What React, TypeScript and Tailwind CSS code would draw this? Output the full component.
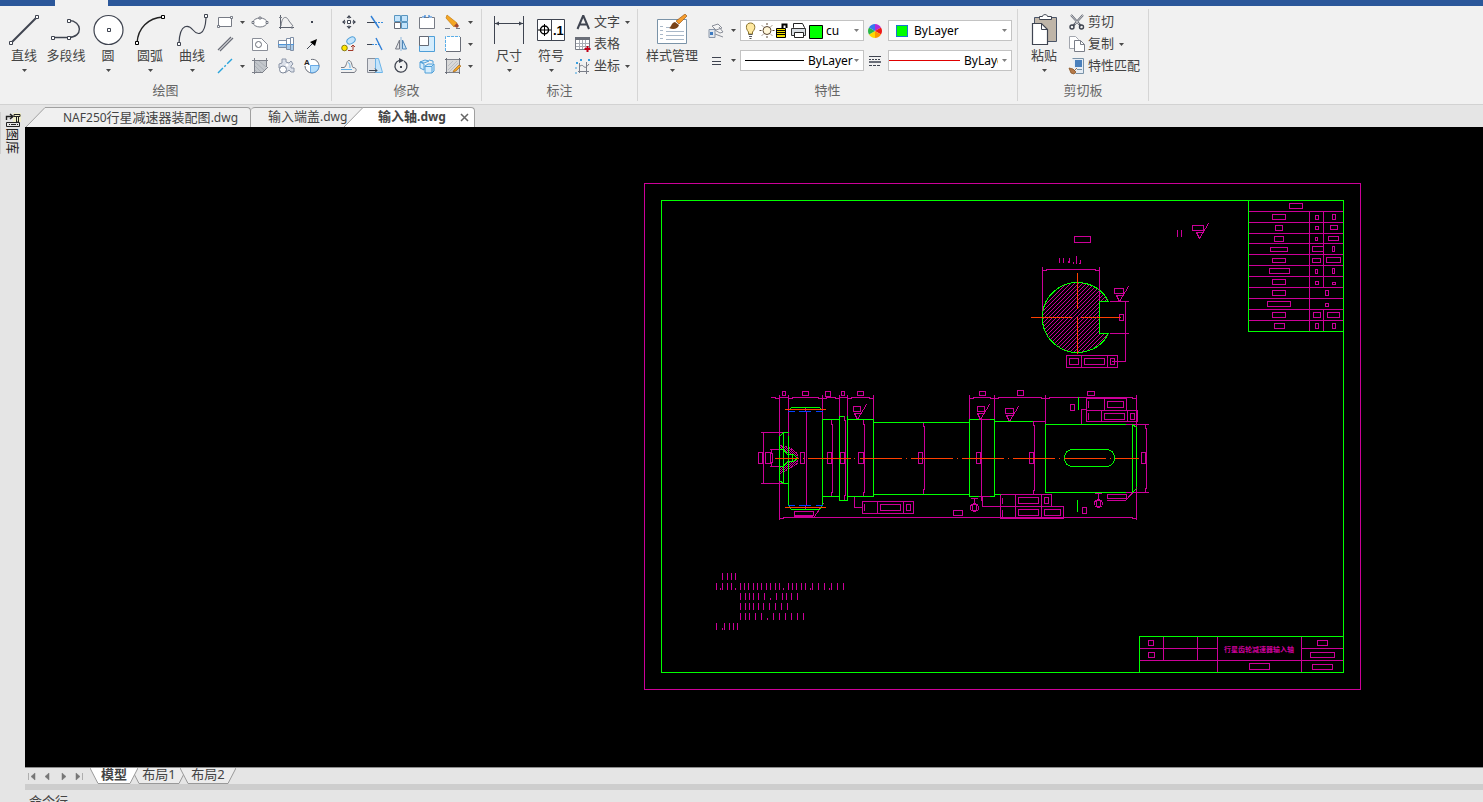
import React, { useState } from 'react';

const INK = '#3f4450';
const BLUE = '#3b8ede';
const PALE = '#c4e4fb';

function Caret({ className = '' }: { className?: string }) {
  return (
    <svg viewBox="0 0 5 3" className={`w-[5px] h-[3px] shrink-0 ${className}`} fill="#4a4a4a" aria-hidden="true">
      <path d="M0 0h5L2.5 3z" />
    </svg>
  );
}

function Icon({ children }: { children: React.ReactNode }) {
  return (
    <svg viewBox="0 0 18 18" className="w-[18px] h-[18px] shrink-0" fill="none" stroke={INK} aria-hidden="true">
      {children}
    </svg>
  );
}

function BigIcon({ children }: { children: React.ReactNode }) {
  return (
    <svg viewBox="0 0 32 32" className="w-8 h-8 shrink-0" fill="none" stroke={INK} aria-hidden="true">
      {children}
    </svg>
  );
}

const bigIcons: Record<string, React.ReactNode> = {
  line: (
    <>
      <path d="M3 29L29 3" strokeWidth="2" />
      <path d="M1.500 27.500h3v3h-3zM27.500 1.500h3v3h-3z" fill="#fff" />
    </>
  ),
  pline: (
    <>
      <path d="M3 23.500h15c16 0 14-17 1-17" strokeWidth="1.400" />
      <path d="M1.500 22.500h3v3h-3zM17.500 22.500h3v3h-3zM17.500 5.500h3v3h-3z" fill="#fff" />
    </>
  ),
  circle: (
    <>
      <circle cx="16.500" cy="16" r="14.500" fill="#fff" strokeWidth="1.200" />
      <path d="M15.500 14.500h3v3h-3z" />
    </>
  ),
  arc: (
    <>
      <path d="M3 29C4 14 14 4 29 3" stroke="#222" strokeWidth="1.400" />
      <path d="M1.500 27.500h3v3h-3zM27.500 1.500h3v3h-3z" fill="#fff" stroke="#000" />
    </>
  ),
  curve: (
    <>
      <path d="M3 29C4 8 13 11 17 16s12 7 13-12" strokeWidth="1.200" />
      <path d="M1.500 28.500h3v3h-3zM28.500.500h3v3h-3z" fill="#fff" />
    </>
  ),
  dim: (
    <>
      <path d="M1.500 2v28M30.500 2v28" />
      <path d="M2 9.500h28" />
      <path d="M2 9.500l4-2v4zM30 9.500l-4-2v4z" fill={INK} stroke="none" />
    </>
  ),
  symbol: (
    <>
      <path d="M2.500 5.500h27v21h-27zM16.500 5.500v21" fill="#fff" />
      <circle cx="9.500" cy="16" r="4" stroke="#000" strokeWidth="1.500" />
      <path d="M3 16h13M9.500 10v12" stroke="#000" />
      <text x="18" y="21" fontSize="13" fontWeight="700" fill="#000" stroke="none" fontFamily="Liberation Sans, sans-serif">.1</text>
    </>
  ),
  style: (
    <>
      <path d="M1.500 5.500h29v24h-29z" fill="#fff" stroke="#7a93a8" />
      <path d="M4 12.500h3M4 16.500h3M4 20.500h3M4 24.500h3M10 13.500h7M10 17.500h18M10 21.500h18M10 25.500h18" stroke="#a9b8c8" />
      <path d="M29 0l2 2-8 8-3-3z" fill="#f59c2c" stroke="#8a4a12" strokeWidth=".600" />
      <path d="M13 14c2 0 2-5 6-6l4 3c-1 4-6 5-10 3z" fill="#7a4318" stroke="none" />
    </>
  ),
  paste: (
    <>
      <path d="M6.500 3.500h22v24h-22z" fill="#bfb5a8" stroke="#4a5568" />
      <path d="M11.500 4.500v-2h3c0-2.500 5-2.500 5 0h4v3h-12z" fill="#fff" />
      <path d="M4.500 9.500h9l6 6v15h-15z" fill="#fff" strokeWidth="1.200" />
      <path d="M13.500 9.500v6h6" />
    </>
  ),
};

const icons: Record<string, React.ReactNode> = {
  rect: (
    <>
      <path d="M2.500 4.500h13v9h-13z" fill="#fff" stroke="#777b85" />
      <path d="M1.500 12.500h2v2h-2zM14.500 3.500h2v2h-2z" fill="#fff" stroke="#5c616d" strokeWidth=".800" />
    </>
  ),
  mline: <path d="M2 15L15 2M4 16L17 3" stroke="#6a6e78" strokeWidth="1.300" />,
  xline: <path d="M2 16L16 2" stroke="#28a4dc" strokeWidth="1.400" strokeDasharray="7 2 2 2" />,
  ellipse: (
    <>
      <ellipse cx="9" cy="9.500" rx="7" ry="4.500" fill="#fff" stroke="#777b85" />
      <path d="M1 8.500h2v2H1zM15 8.500h2v2h-2zM8 4h2v2H8z" fill="#fff" stroke="#5c616d" strokeWidth=".800" />
    </>
  ),
  region: (
    <>
      <path d="M1.500 3.500h9l6 6v6h-15z" fill="#fff" stroke="#8a8e98" />
      <circle cx="7.500" cy="9.500" r="3" stroke="#6a6e78" />
    </>
  ),
  hatch: (
    <>
      <path d="M3.500 3.500h12v8l-4 4h-8z" fill="#c3c7cc" stroke="none" />
      <path d="M4 5l10 9M4 9l6 6M8 4l7 6M4 13l2 2" stroke="#a4a9b0" strokeWidth=".800" />
      <path d="M3.500 1v16M1 3.500h16M15.500 1v9M1 15.500h10M17 10l-6 6" stroke="#7d818a" />
    </>
  ),
  chart: (
    <>
      <path d="M3.500 2v14M2 14.500h15" stroke="#5c616d" />
      <path d="M4 13C5 2 10 3 12 8l4 5M2 4.500h3M15 13v3" stroke="#7d818a" />
    </>
  ),
  flange: (
    <>
      <path d="M1.500 5.500h8v-2h4v-1h3v13h-3v-1h-4v-2h-8z" fill="#fff" stroke="#7f8fa6" />
      <path d="M2 10h14v5h-2l-1-1h-3l-1-2H2z" fill="#a8cbea" stroke="none" />
      <path d="M1 9.500h16" stroke="#4d94d8" />
      <path d="M9.500 4v10M13.500 3v12" stroke="#7f8fa6" />
    </>
  ),
  gear: (
    <>
      <path d="M5 2h4v3l3 1 2-2 2 3-2 2 0 2h3v4h-3l-2-2-4 3-2-4-4-1V7l3-1z" fill="#dce1ea" stroke="#8c96a8" />
      <circle cx="6" cy="12.500" r="3.500" fill="#fff" stroke="#7d8799" />
      <circle cx="10" cy="8" r="1.500" fill="#fff" stroke="none" />
    </>
  ),
  point: <path d="M8 8h2v2H8z" fill={INK} stroke="none" />,
  leader: (
    <>
      <path d="M4 14l6-6" />
      <path d="M14 4l-2 7-5-4z" fill="#000" stroke="none" />
    </>
  ),
  viewA: (
    <>
      <path d="M8 2.500c5-1 8 3 8 6.500a7 7 0 0 1-14 0" fill="#fff" stroke="#6a6e78" />
      <path d="M7.500 8.500H16c0 5-4 8-8.500 7z" fill="#b5defb" stroke="#3b8ede" strokeWidth=".700" />
      <text x="1" y="8" fontSize="8" fontWeight="700" fill="#222" stroke="none" fontFamily="Liberation Sans, sans-serif">A</text>
    </>
  ),
  move: (
    <>
      <path d="M7.500 7.500h3v3h-3z" fill="#fff" />
      <path d="M9 2l2.500 3h-5zM9 16l2.500-3h-5zM2 9l3-2.500v5zM16 9l-3-2.500v5z" fill={INK} stroke="none" />
      <path d="M9 4v2M9 12v2M4 9h2M12 9h2" stroke="#8a8e98" />
    </>
  ),
  trim: (
    <>
      <path d="M1 9.500h8" stroke={INK} />
      <path d="M9 9.500h8" stroke={BLUE} strokeDasharray="2 1" />
      <path d="M5 3l8 12" stroke="#2f7fd6" strokeWidth="1.400" />
    </>
  ),
  array: (
    <>
      <path d="M2.500 2.500h6v6h-6zM9.500 2.500h6v6h-6zM9.500 9.500h6v6h-6z" fill={PALE} stroke="#5a96c0" />
      <path d="M2.500 9.500h6v6h-6z" fill="#fff" stroke="#666b76" />
    </>
  ),
  breakIt: (
    <>
      <path d="M4 4.500H1.500v11h15v-11H14M6 4.500h5" fill="#fff" stroke="#777b85" />
      <path d="M4 4h3V2M14 4h-3V2" stroke="#2f7fd6" strokeWidth="1.200" />
    </>
  ),
  erase: (
    <>
      <path d="M3 2l10 8-3 4-8-9z" fill="#f5a623" stroke="#c67c0e" strokeWidth=".700" />
      <path d="M10 13l3-3 2 3-2 2z" fill="#a24b32" stroke="none" />
      <path d="M1 15.500h5M12 15.500h4" stroke="#777b85" />
    </>
  ),
  copy: (
    <>
      <ellipse cx="11" cy="5.500" rx="4.500" ry="3" transform="rotate(-30 11 5.500)" fill={PALE} stroke="#4f9fd8" />
      <circle cx="4.500" cy="13" r="2.800" fill="#ffe600" stroke="#6b6200" strokeWidth=".800" />
      <path d="M8 15.500h5V10l-2 2m2-2l2 2" stroke="#a33a2a" />
    </>
  ),
  extend: (
    <>
      <path d="M1 9.500h5" />
      <path d="M6 9.500h7" stroke={BLUE} strokeDasharray="2 1" />
      <path d="M10 3l6 12" stroke="#2f7fd6" strokeWidth="1.400" />
    </>
  ),
  mirror: (
    <>
      <path d="M7.500 5v9h-4z" fill="#e2e4e8" stroke="#777b85" />
      <path d="M10.500 5v9h4z" fill={PALE} stroke="#4f86b8" />
      <path d="M9 2v14" stroke="#8bb6dc" />
    </>
  ),
  scale: (
    <>
      <path d="M1.500 1.500h15v15h-15z" fill="#d5edfd" stroke="#4f9fd8" />
      <path d="M1.500 1.500h9v9h-9z" fill="#fff" stroke="#666b76" />
    </>
  ),
  stretch: (
    <>
      <path d="M2 2h14v14H2z" fill="#fff" stroke="none" />
      <path d="M16.500 2v14.500H2" stroke="#6a6e78" />
      <path d="M1.500 16V1.500H16" stroke="#5aaee8" strokeDasharray="3 1" />
    </>
  ),
  offset: (
    <>
      <path d="M1 15.500h13c3-1 3-5-1-5-1 0-1-7-4-7s-2 6-5 7H1" stroke="#777b85" />
      <path d="M1 12.500h11M8 6c2-1 2 4 2 5" stroke="#5aaee8" />
    </>
  ),
  chamfer: (
    <>
      <path d="M1.500 1.500h8v14h-8z" fill="#e2e4e8" stroke="#8a8e98" />
      <path d="M9.500 1.500h3l4 14h-7z" fill={PALE} stroke="#6db4e8" />
      <path d="M3 13.500h8l-2-2m2 2l-2 2" />
    </>
  ),
  rotate: (
    <>
      <path d="M7 3.500a6 6 0 1 0 5 .500" strokeWidth="1.300" />
      <path d="M7 1l5 2.500L7 6z" fill={INK} stroke="none" />
      <path d="M8 9h2v2H8z" fill={INK} stroke="none" />
    </>
  ),
  explode: (
    <>
      <path d="M2 5l5-2 4 1-5 2zM2 5v6l4 2V7zM7 9l3-2h6v7l-2 2H7z" fill="#d5edfd" stroke="#4f9fd8" />
      <path d="M7 9.500h7V16M14 9l2-2M11 3l4 1v2" stroke="#4f9fd8" />
    </>
  ),
  editHatch: (
    <>
      <path d="M2.500 2.500h13v13h-13z" fill="#d9d9d9" stroke="#7d818a" />
      <path d="M4 9l5-5M4 13l9-9M5 15l9-9" stroke="#b4b8be" strokeWidth=".800" />
      <path d="M1 2.500h2M2.500 1v2M15 2.500h2M15.500 1v2M1 15.500h2M2.500 15v2M15.500 15v2" stroke="#6a6e78" />
      <path d="M10 13l5-5 2 1-5 5-3 1z" fill="#f5a623" stroke="#9a5c10" strokeWidth=".600" />
    </>
  ),
  textA: <path d="M3.500 16L9 3h.500L15 16M5.500 11.500h7" strokeWidth="2" />,
  table: (
    <>
      <path d="M1.500 2.500h14v12h-14z" fill="#fff" stroke="#777b85" />
      <path d="M1 2h15v3H1z" fill="#6a6e78" stroke="none" />
      <path d="M2 8.500h13M2 11.500h13M5.500 5v9M8.500 5v9M11.500 5v9" stroke="#a8acb4" />
      <path d="M13.500 11v6M10.500 14h6" stroke="#c00018" strokeWidth="2" />
    </>
  ),
  coord: (
    <>
      <path d="M5.500 6v10M4 14.500h11M6 9c5-3 3 6 9-2M12.500 5v12" stroke="#7a7e88" />
      <path d="M2 5l2 2M4 5l-2 2M6 2l2 2M8 2L6 4M14 2l2 2M16 2l-2 2M1 11h2M1 16h2" stroke="#3aa0e0" />
    </>
  ),
  layers: (
    <>
      <path d="M5 4l6-2 4 4-6 2zM6 7l7 4 3-1-4-5" fill="#f5f5f5" stroke="#8a8e98" />
      <path d="M2 7.500h6v8H2z" fill="#dfe6ee" stroke="#8a96a8" />
      <path d="M3 10h3v3H3z" fill="#3c7ac0" stroke="none" />
      <path d="M8 12l8 3" stroke="#8a8e98" />
    </>
  ),
  weight: <path d="M5 5.500h9M5 9.500h9M5 12.500h9" />,
  ltype: (
    <>
      <path d="M3 4.500h12" />
      <path d="M3 7.500h12" strokeDasharray="2 1" />
      <path d="M3 10h12" strokeWidth="2" stroke="#6a6e78" />
      <path d="M3 13.500h12" strokeDasharray="3 1" />
    </>
  ),
  wheel: (
    <g stroke="none" transform="translate(9 9)">
      <path d="M0 0L0-7A7 7 0 0 1 6-3.500z" fill="#b22bd8" />
      <path d="M0 0L6-3.500A7 7 0 0 1 6 3.500z" fill="#f01818" />
      <path d="M0 0L6 3.500A7 7 0 0 1 0 7z" fill="#ff9800" />
      <path d="M0 0L0 7A7 7 0 0 1-6 3.500z" fill="#ffd800" />
      <path d="M0 0L-6 3.500A7 7 0 0 1-6-3.500z" fill="#28b848" />
      <path d="M0 0L-6-3.500A7 7 0 0 1 0-7z" fill="#3478f0" />
    </g>
  ),
  cut: (
    <>
      <path d="M3 2l10 11M15 2L5 13" stroke="#5c616d" strokeWidth="2" />
      <path d="M3 2l8 9M15 2L7 11" stroke="#fff" strokeWidth=".700" />
      <circle cx="4" cy="14" r="2" strokeWidth="1.400" />
      <circle cx="13.500" cy="14" r="2" strokeWidth="1.400" />
    </>
  ),
  copyDoc: (
    <>
      <path d="M1.500 1.500h6l3 3v9h-9z" fill="#fff" stroke="#a2a6ae" />
      <path d="M6.500 5.500h6l4 4v7h-10z" fill="#fff" stroke="#7a7e88" />
      <path d="M12.500 5.500v4h4" stroke="#7a7e88" />
    </>
  ),
  match: (
    <>
      <path d="M4.500 1.500h11v15h-8" fill="#e6edf5" stroke="#7a93a8" />
      <path d="M7 3h7v7H7z" fill="#4a80bc" stroke="none" />
      <path d="M9 12.500h5" stroke="#7a93a8" />
      <path d="M9 11l-3 3M1 11l4 1 3 3-2 2-3-1z" fill="#b4794a" stroke="#8a5526" strokeWidth=".800" />
    </>
  ),
};

function LargeButton({ icon, label, caret = true, wide = false }: { icon: string; label: string; caret?: boolean; wide?: boolean }) {
  return (
    <button type="button" className={`flex flex-col items-center pt-[5px] hover:bg-[#dce6f4] ${wide ? 'w-14' : 'w-[42px]'}`}>
      <BigIcon>{bigIcons[icon]}</BigIcon>
      <span className="mt-px leading-4 whitespace-nowrap">{label}</span>
      {caret && <Caret className="mt-[6px]" />}
    </button>
  );
}

function Tool({ name, title }: { name: string; title: string }) {
  return (
    <button type="button" aria-label={title} className="w-[26px] h-[22px] flex items-center justify-center hover:bg-[#dce6f4]">
      <Icon>{icons[name]}</Icon>
    </button>
  );
}

function DropTool({ name, title, caret = true }: { name: string; title: string; caret?: boolean }) {
  return (
    <button type="button" aria-label={title} className="h-[22px] flex items-center gap-[6px] hover:bg-[#dce6f4]">
      <Icon>{icons[name]}</Icon>
      {caret && <Caret />}
    </button>
  );
}

function TextTool({ name, label, caret = false }: { name: string; label: string; caret?: boolean }) {
  return (
    <button type="button" className="h-[22px] flex items-center hover:bg-[#dce6f4]">
      <Icon>{icons[name]}</Icon>
      <span className="ml-0.5 pb-0.5 leading-4 whitespace-nowrap">{label}</span>
      {caret && <Caret className="ml-[5px]" />}
    </button>
  );
}

function Group({ label, className, children }: { label: string; className: string; children: React.ReactNode }) {
  return (
    <section className="flex flex-col my-[3px] border-r border-[#d5d5d5] shrink-0">
      <div className={`flex items-start h-[73px] ${className}`}>{children}</div>
      <h2 className="h-4 mb-[3px] leading-4 text-center text-[#666]">{label}</h2>
    </section>
  );
}

function Combo({ label, value, lead, narrow = false }: { label: string; value: string; lead: React.ReactNode; narrow?: boolean }) {
  return (
    <div className="w-[124px] h-[21px] flex items-center bg-white border border-[#c3c3c3] pl-1 pr-1 text-black">
      {lead}
      <select
        aria-label={label}
        defaultValue={value}
        className={`flex-1 min-w-0 h-full appearance-none bg-transparent text-[12px] leading-4 outline-none ${narrow ? 'mr-1' : ''}`}
      >
        <option>{value}</option>
      </select>
      <Caret className="opacity-70" />
    </div>
  );
}

const layerState = (
  <svg viewBox="0 0 78 19" className="w-[78px] h-[19px] shrink-0" fill="none" stroke="#222" aria-hidden="true">
    <path d="M3.500 11C0 7 1 2 5.500 2s6 5 2 9v2h-4z" fill="#ffe9a0" stroke="#8a7430" />
    <path d="M3.500 13.500h4M4 15.500h3M4.500 17.500h2" stroke="#555" />
    <circle cx="22" cy="9.500" r="4" fill="#fff6d8" stroke="#5a4630" />
    <path d="M22 2v2M22 15v2M14.500 9.500h2M27.500 9.500h2M17 4.500l1 1M27 4.500l-1 1M17 14.500l1-1M27 14.500l-1-1" stroke="#5a4630" />
    <path d="M31.500 7.500h9v9h-9z" fill="#f0e000" stroke="#000" />
    <path d="M32 9.500h8M32 11.500h8M32 13.500h8" stroke="#000" />
    <path d="M37.500 7V3.500h4V7" stroke="#000" strokeWidth="2" />
    <path d="M48.500 6.500v-4h9l2 4v3h-11z" fill="#fff" />
    <path d="M46.500 7.500h14v7h-14z" fill="#d8dde2" stroke="#333" />
    <path d="M49.500 11.500h9v5h-9z" fill="#fff" />
    <path d="M64.500 4.500h13v13h-13z" fill="#00ff00" stroke="#000" />
  </svg>
);

const colourSwatch = <span className="w-3 h-3 ml-[3px] mr-1.5 bg-[#00ff00] border border-[#1878d0] shrink-0" />;

function Ribbon() {
  return (
    <div className="flex bg-[#f1f1f1] border-b border-[#d2d2d2] overflow-hidden shrink-0">
      <Group label="绘图" className="pl-[3px] pr-[6px]">
        <LargeButton icon="line" label="直线" />
        <LargeButton icon="pline" label="多段线" caret={false} />
        <LargeButton icon="circle" label="圆" />
        <LargeButton icon="arc" label="圆弧" />
        <LargeButton icon="curve" label="曲线" />
        <div className="flex pt-0.5 ml-[3px]">
          <div className="w-[31px]">
            <DropTool name="rect" title="矩形" />
            <DropTool name="mline" title="多线" caret={false} />
            <DropTool name="xline" title="构造线" />
          </div>
          <div className="grid grid-cols-3">
            <Tool name="ellipse" title="椭圆" />
            <Tool name="chart" title="函数曲线" />
            <Tool name="point" title="点" />
            <Tool name="region" title="面域" />
            <Tool name="flange" title="轴" />
            <Tool name="leader" title="箭头" />
            <Tool name="hatch" title="填充" />
            <Tool name="gear" title="齿轮" />
            <Tool name="viewA" title="局部视图" />
          </div>
        </div>
      </Group>

      <Group label="修改" className="pl-1 pr-[7px]">
        <div className="grid grid-cols-5 pt-0.5">
          <Tool name="move" title="移动" />
          <Tool name="trim" title="修剪" />
          <Tool name="array" title="阵列" />
          <Tool name="breakIt" title="打断" />
          <Tool name="erase" title="删除" />
          <Tool name="copy" title="复制对象" />
          <Tool name="extend" title="延伸" />
          <Tool name="mirror" title="镜像" />
          <Tool name="scale" title="缩放" />
          <Tool name="stretch" title="拉伸" />
          <Tool name="offset" title="偏移" />
          <Tool name="chamfer" title="倒角" />
          <Tool name="rotate" title="旋转" />
          <Tool name="explode" title="分解" />
          <Tool name="editHatch" title="编辑填充" />
        </div>
        <div className="w-2 pt-0.5">
          {['删除选项', '拉伸选项', '填充选项'].map((t) => (
            <button key={t} type="button" aria-label={t} className="w-2 h-[22px] flex items-center justify-center">
              <Caret />
            </button>
          ))}
        </div>
      </Group>

      <Group label="标注" className="pl-[6px] pr-[7px]">
        <LargeButton icon="dim" label="尺寸" />
        <LargeButton icon="symbol" label="符号" />
        <div className="pt-0.5 ml-0.5">
          <TextTool name="textA" label="文字" caret />
          <TextTool name="table" label="表格" />
          <TextTool name="coord" label="坐标" caret />
        </div>
      </Group>

      <Group label="特性" className="pl-[6px] pr-[5px]">
        <LargeButton icon="style" label="样式管理" wide />
        <div className="flex flex-col gap-[9px] pt-[11px] ml-[7px]">
          <div className="flex items-center h-[21px]">
            <DropTool name="layers" title="图层" />
            <div className="ml-1">
              <Combo label="图层" value="cu" lead={<>{layerState}<span className="w-[3px] shrink-0" /></>} />
            </div>
            <span className="ml-0.5 mr-1"><Icon>{icons.wheel}</Icon></span>
            <Combo label="颜色" value="ByLayer" lead={colourSwatch} />
          </div>
          <div className="flex items-center h-[21px]">
            <DropTool name="weight" title="线宽" />
            <div className="ml-1">
              <Combo label="线宽" value="ByLayer" lead={<span className="w-[59px] h-px mr-1 bg-black shrink-0" />} />
            </div>
            <span className="ml-0.5 mr-1"><Icon>{icons.ltype}</Icon></span>
            <Combo label="线型" value="ByLayer" narrow lead={<span className="w-[71px] h-px mr-1 -ml-1 bg-[#e00000] shrink-0" />} />
          </div>
        </div>
      </Group>

      <Group label="剪切板" className="pl-[5px] pr-2">
        <LargeButton icon="paste" label="粘贴" />
        <div className="pt-0.5 ml-[3px]">
          <TextTool name="cut" label="剪切" />
          <TextTool name="copyDoc" label="复制" caret />
          <TextTool name="match" label="特性匹配" />
        </div>
      </Group>
    </div>
  );
}

function FileTabs() {
  return (
    <nav className="flex items-end h-[22px] pl-px bg-[#e5e5e5] leading-4 text-[#444] overflow-hidden shrink-0">
      <button type="button" className="flex h-5">
        <svg viewBox="0 0 20 20" className="w-5 h-5" aria-hidden="true">
          <path d="M0 20L19 .500h1V20z" fill="#f0f0f0" />
          <path d="M0 20L19 .500h1" fill="none" stroke="#a0a0a0" />
        </svg>
        <span className="w-[205px] h-5 pl-[17px] pt-px text-left whitespace-nowrap bg-[#f0f0f0] border-t border-r border-[#a0a0a0] rounded-tr-sm">
          <span className="text-[12px]">NAF250</span>行星减速器装配图<span className="text-[12px]">.dwg</span>
        </span>
      </button>
      <button type="button" className="w-28 h-5 pl-[17px] pb-0.5 text-left whitespace-nowrap bg-[#f0f0f0] border-t border-[#a0a0a0] rounded-tl-sm">
        输入端盖<span className="text-[12px]">.dwg</span>
      </button>
      <div className="relative flex h-5 -ml-[19px]">
        <svg viewBox="0 0 20 20" className="w-5 h-5" aria-hidden="true">
          <path d="M0 20L19 .500h1V20z" fill="#fff" />
          <path d="M0 20L19 .500h1" fill="none" stroke="#a0a0a0" />
        </svg>
        <div className="w-[111px] h-5 pl-[14px] pr-[5px] flex items-center justify-between bg-white border-t border-r border-[#a0a0a0] rounded-tr-sm">
          <button type="button" className="pb-0.5 font-bold whitespace-nowrap">
            输入轴<span className="text-[12px]">.dwg</span>
          </button>
          <button type="button" aria-label="关闭">
            <svg viewBox="0 0 9 9" className="w-[9px] h-[9px]" stroke="#666" strokeWidth="1.500" aria-hidden="true">
              <path d="M1 1l7 7M8 1L1 8" />
            </svg>
          </button>
        </div>
      </div>
    </nav>
  );
}

// x, y, width, height of every annotation frame on the sheet
const frames = [
  [644, 183, 716, 506],
  [1289, 203, 13, 5],
  [1272, 214, 13, 5], [1315, 215, 3, 4], [1332, 214, 3, 5],
  [1275, 225, 7, 5], [1315, 226, 3, 3], [1330, 225, 7, 4],
  [1274, 236, 9, 5], [1315, 237, 2, 3], [1328, 236, 10, 4],
  [1270, 247, 17, 4], [1312, 246, 11, 5], [1332, 246, 2, 5],
  [1272, 258, 13, 4], [1312, 258, 8, 4], [1326, 257, 14, 5],
  [1269, 268, 20, 5], [1315, 269, 2, 4], [1332, 268, 2, 5],
  [1272, 279, 13, 5], [1315, 281, 3, 3], [1332, 282, 3, 2],
  [1272, 290, 13, 5], [1325, 290, 3, 5],
  [1267, 301, 23, 5], [1325, 303, 3, 3],
  [1272, 312, 13, 5], [1313, 312, 7, 5], [1327, 312, 12, 5],
  [1274, 323, 10, 5], [1315, 323, 3, 5], [1332, 323, 3, 5],
  // section view
  [1074, 236, 16, 6], [1119, 314, 4, 6],
  [1066, 355, 51, 12], [1069, 358, 9, 6], [1084, 358, 20, 6], [1110, 358, 4, 6],
  // shaft, upper dimensions
  [782, 391, 3, 4], [802, 391, 6, 4], [825, 391, 5, 5], [841, 391, 3, 4], [857, 391, 6, 4],
  [979, 391, 6, 4], [1017, 390, 6, 5], [1087, 391, 7, 4],
  [1086, 398, 40, 12], [1086, 410, 51, 11], [1107, 401, 16, 6], [1104, 413, 20, 6], [1130, 413, 4, 6],
  [1070, 404, 4, 6],
  // diameters
  [758, 452, 4, 11], [765, 452, 5, 11], [800, 452, 4, 11], [827, 452, 4, 11], [840, 452, 4, 11],
  [858, 452, 5, 11], [918, 452, 4, 11], [976, 452, 4, 11], [1029, 452, 4, 11], [1141, 452, 4, 11],
  // shaft, lower dimensions
  [794, 511, 19, 4], [862, 501, 51, 12], [880, 504, 20, 6], [906, 504, 4, 6], [953, 510, 9, 5],
  [972, 504, 4, 6], [1096, 500, 4, 6], [1082, 507, 4, 6], [1107, 494, 19, 4],
  [1000, 494, 51, 12], [1018, 497, 20, 6], [1044, 497, 4, 6],
  [1000, 506, 63, 12], [1018, 509, 20, 6], [1044, 509, 16, 6],
  // title block
  [1148, 640, 5, 5], [1148, 652, 6, 5], [1317, 640, 10, 5], [1310, 652, 24, 5], [1249, 663, 20, 6], [1312, 664, 20, 5],
];

const tableRows = [211, 222, 233, 243, 254, 265, 276, 287, 298, 309, 320];

const spans = [[788, 822], [822, 839], [847, 873], [969, 994], [994, 1045], [1045, 1136]];

// tall strokes and short strokes of each line of the technical notes
const notes = [
  { y: 573, tall: [722, 727, 731, 735], low: [] },
  {
    y: 583,
    tall: [716, 722, 727, 731, 740, 744, 748, 753, 757, 761, 766, 770, 775, 779, 788, 792, 796, 801, 805, 812, 818, 824, 831, 837, 843],
    low: [720, 735, 783, 810, 829],
  },
  { y: 593, tall: [740, 745, 749, 753, 758, 764, 776, 782, 786, 791, 797], low: [770] },
  { y: 603, tall: [740, 745, 749, 753, 758, 763, 769, 775, 781, 787], low: [] },
  { y: 613, tall: [740, 745, 749, 755, 761, 773, 779, 785, 791, 797, 803], low: [767] },
  { y: 623, tall: [716, 724, 729, 733, 737], low: [722] },
];

// surface finish mark: tip at x, y with its value frame starting at left
function Roughness({ x, y, left, w }: { x: number; y: number; left: number; w: number }) {
  return (
    <path d={`M${left} ${y - 13}h${w}v5h${-w}zM${x - 3} ${y - 6}h7M${x - 3} ${y - 6}L${x} ${y}L${x + 9} ${y - 15}`} />
  );
}

function Drawing() {
  return (
    <svg viewBox="25 127 1458 640" className="w-full h-full" fill="none" shapeRendering="crispEdges" strokeLinecap="square" role="img" aria-label="输入轴">
      <defs>
        <clipPath id="section">
          <path d="M1108 301A35 35 0 1 0 1108 333H1099V301z" />
        </clipPath>
        <clipPath id="bore">
          <path d="M779 445L789 447L797 453V463L788 469L779 473V466H783L787 461H793L797 458L793 454H787L783 449H779z" />
        </clipPath>
      </defs>
      <g transform="translate(.5 .5)">
        <g stroke="#cc0099">
          {frames.map(([x, y, w, h]) => (
            <rect key={`${x}-${y}`} x={x} y={y} width={w} height={h} />
          ))}

          {tableRows.map((y) => (
            <path key={y} d={`M1248 ${y}H1343`} />
          ))}
          <path d="M1309 211V331M1323 211V287M1323 309V331" />

          <path d="M1139 648H1217M1301 648H1343M1139 660H1343M1163 636V660M1197 636V660M1217 636V672M1301 636V672" />

          {spans.map(([a, b]) => (
            <path key={a} d={`M${a} 398h4v-1H${b - 4}v1h4`} />
          ))}
          <path d="M771 397h4v1h4M779 397H788M839 397H847" />
          <path d="M779 395V519M788 395V436M822 395V419M839 395V416M847 395V416M873 395V419M969 395V419M994 395V419M1045 395V424M1136 395V519" />
          <path d="M779 518h4v-1H1132v1h4" />

          <path d="M763 432V483M761 432H785M761 483H785M771 449V453M772 453V462M771 462V466M770 449H783M770 466H783" />
          <path d="M806 411V505M805 407V411M805 505V509M794 516H812M814 516L823 503" />
          <path d="M831 419V424M832 424V492M831 492V496M844 416V420M845 420V495M844 495V500" />
          <path d="M863 419V424M864 424V492M863 492V496M923 422V426M924 426V489M923 489V494" />
          <path d="M854 496V507H862M864 504V510M877 501V513M903 501V513" />
          <path d="M979 419H990M981 419V500M979 496H990M1032 421H1045M1033 421V425M1034 425V490M1033 490V494M1000 494H1045" />
          <path d="M982 496V506H1000M1002 498V503M1002 510V516M1015 494V518M1041 494V518" />
          <path d="M971 498H977M974 498V503M1095 493H1101M1098 493V498" />
          <circle cx="974" cy="507" r="4" />
          <circle cx="1098" cy="503" r="4" />
          <path d="M1088 401V407M1088 413V419M1104 398V410M1101 410V421M1127 410V421M1081 424V409H1086" />
          <path d="M1125 424H1148M1125 492H1148M1145 424V428M1146 428V488M1145 488V492M1107 500H1125M1125 500L1136 488" />

          <path d="M1042 267V320M1099 267V301M1042 270h4v-1H1095v1h4" />
          <path d="M1110 301H1128M1110 333H1128M1125 301V361M1112 361H1125M1081 355V367M1107 355V367" />
          <path d="M1059 258V262M1063 258V262M1069 258V262M1068 261V262M1073 262V263M1076 256V263M1080 260V263M1079 263V263M1177 230V236M1181 230V236" />

          <g clipPath="url(#section)">
            {Array.from({ length: 44 }, (_, i) => (
              <path key={i} d={`M${960 + i * 4} 357l80-80`} />
            ))}
          </g>
          <g clipPath="url(#bore)">
            {Array.from({ length: 24 }, (_, i) => (
              <path key={i} d={`M${746 + i * 2} 475l32-32`} />
            ))}
          </g>
          <path d="M779 445L789 447L797 453V463L788 469L779 473" strokeDasharray="2 1" strokeLinecap="butt" />

          <Roughness x={1199} y={238} left={1192} w={11} />
          <Roughness x={1119} y={301} left={1114} w={9} />
          <Roughness x={857} y={419} left={853} w={7} />
          <Roughness x={980} y={419} left={977} w={7} />
          <Roughness x={1009} y={421} left={1005} w={8} />

          {notes.map((n) => (
            <g key={n.y}>
              {n.tall.map((x) => <path key={x} d={`M${x} ${n.y}v6`} />)}
              {n.low.map((x) => <path key={x} d={`M${x} ${n.y + 5}v1`} />)}
            </g>
          ))}
        </g>

        <g stroke="#00ff00">
          <path d="M661 200H1343V672H661zM1248 200V331H1343M1139 672V636H1343" />
          <path d="M1108 301A35 35 0 1 0 1108 333H1099V301z" />
          <path d="M788 436V505L791 509H819L822 505V419M789 409L791 407H819L821 409" />
          <path d="M783 432V483M783 432H788M783 483H788M779 436V480M779 436L783 432M779 480L783 483" />
          <path d="M779 449H783L787 454H793L797 458L793 461H787L783 466H779M788 454V461M792 454V461" />
          <path d="M822 419H839M822 496H839M839 416V500H847V416M839 416H843M847 419H873V496H847" />
          <path d="M873 422H969M873 494H969M969 419V496M969 419H978M969 496H978M990 419H994V496H990" />
          <path d="M994 421H1032M994 494H1000M1125 424H1045V492H1125M1132 424V492M1136 428V486M1132 424L1136 427M1132 492L1136 488" />
          <path d="M1078 397V409M1077 500V511" />
          <rect x="1064" y="449" width="50" height="17" rx="8" />
        </g>

        <path d="M788 411H794M799 411H810M816 411H822M788 505H794M799 505H810M816 505H822" stroke="#0040ff" />
        <path
          d="M785 409H825M785 507H825M775 458H798M803 458h0M808 458H850M854 458h0M860 458H901M906 458h0M911 458H952M957 458h0M962 458H1003M1008 458h0M1013 458H1054M1059 458h0M1064 458H1105M1110 458h0M1115 458H1138M1077 273V308M1077 317V353M1031 317H1071M1081 317H1120"
          stroke="#ff4000"
        />
      </g>
      <text x="1259" y="652" textAnchor="middle" fontSize="7" fontWeight="700" fill="#cc0099" fontFamily="'Noto Sans CJK SC', sans-serif">
        行星齿轮减速器输入轴
      </text>
    </svg>
  );
}

const navIcons = [
  { label: '第一页', d: 'M1.500 1v7M8 1v7L4 4.500z' },
  { label: '上一页', d: 'M6 1v7L2 4.500z' },
  { label: '下一页', d: 'M3 1v7l4-3.500z' },
  { label: '最后一页', d: 'M1 1v7l4-3.500zM7.500 1v7' },
];

const sheets = ['模型', '布局1', '布局2'];

function SheetTabs() {
  const [active, setActive] = useState('模型');

  return (
    <div className="flex h-[17px] border-t border-[#8c8c8c] bg-[#e5e5e5] shrink-0">
      <div className="flex items-center gap-[7px] pl-[2px] mr-[6px]">
        {navIcons.map((n) => (
          <button key={n.label} type="button" aria-label={n.label}>
            <svg viewBox="0 0 9 9" className="w-[9px] h-[9px]" fill="#777" stroke="#777" strokeWidth=".5" aria-hidden="true">
              <path d={n.d} />
            </svg>
          </button>
        ))}
      </div>
      {sheets.map((s) => {
        const on = s === active;
        const fill = on ? '#fff' : '#ececec';
        return (
          <button key={s} type="button" onClick={() => setActive(s)} className={`flex h-4 -mr-[7px] ${on ? 'relative font-bold' : ''}`}>
            <svg viewBox="0 0 8 16" className="w-2 h-4" aria-hidden="true">
              <path d="M0 0h8v16z" fill={fill} />
              <path d="M0 0l8 15.500" stroke="#999" />
            </svg>
            <span className={`h-4 leading-[13px] text-center whitespace-nowrap border-b border-[#999] ${on ? 'w-8 bg-white' : 'w-10 bg-[#ececec]'}`}>
              {s}
            </span>
            <svg viewBox="0 0 8 16" className="w-2 h-4" aria-hidden="true">
              <path d="M8 0H0v16z" fill={fill} />
              <path d="M8 0L0 15.500" stroke="#999" />
            </svg>
          </button>
        );
      })}
    </div>
  );
}

export default function App() {
  return (
    <div className="h-screen flex flex-col overflow-hidden bg-[#e5e5e5] text-[13px] text-[#444] font-['Noto_Sans','Noto_Sans_CJK_SC',sans-serif]">
      <header className="h-1.5 bg-[#2b579a] shrink-0">
        <div className="w-[53px] h-1.5 ml-[55px] bg-[#f1f1f1]" />
      </header>
      <Ribbon />

      <main className="flex flex-1 min-h-0">
        <aside className="w-[25px] pt-[7px] shrink-0">
          <button type="button" className="w-6 flex flex-col items-center border-l border-[#cfcfcf]">
            <svg viewBox="0 0 16 16" className="w-4 h-4" fill="none" stroke="#222" aria-hidden="true">
              <path d="M8 1h8v9H8z" fill="#f0eec8" stroke="none" />
              <path d="M1.500 8V4.500H7M5 2l3 2.500L5 7" strokeWidth="1.400" />
              <path d="M9 2.500h6v2H9zM11.500 5v5h2V5" />
              <path d="M1.500 10.500h13v4h-13zM4 12.500h1M6 12.500h5M12 12.500h1" />
            </svg>
            <span className="h-[26px] flex items-center text-[#222]">
              <span className="w-[26px] rotate-90 -mx-2 leading-4 whitespace-nowrap">图库</span>
            </span>
          </button>
        </aside>

        <div className="flex flex-col flex-1 min-w-0">
          <FileTabs />
          <div className="flex-1 min-h-0 bg-black">
            <Drawing />
          </div>
          <SheetTabs />
          <div className="h-1.5 bg-[#cdcdcd] shrink-0" />
          <div className="h-3 pl-1 pt-[3px] leading-4 overflow-hidden shrink-0">命令行</div>
        </div>
      </main>
    </div>
  );
}
